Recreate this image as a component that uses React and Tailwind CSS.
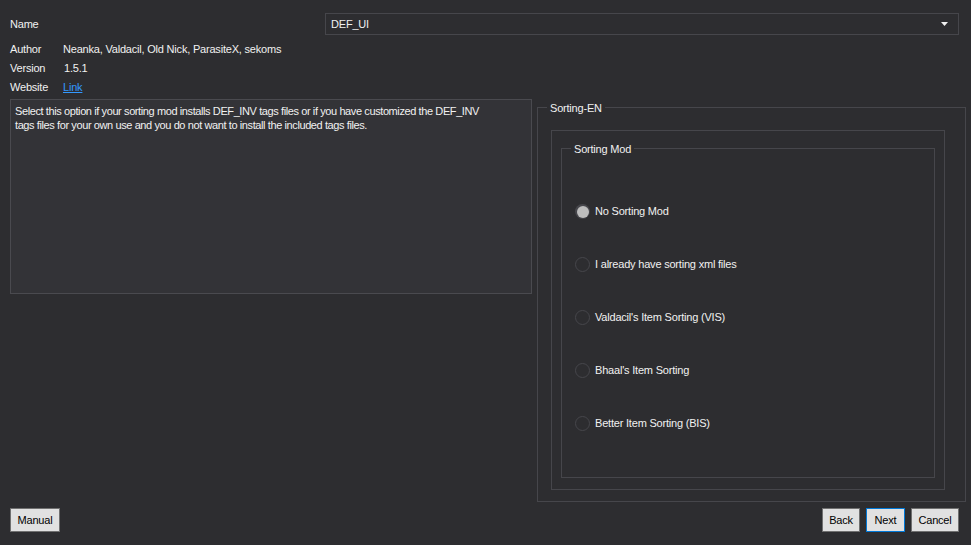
import React from 'react';

const options = [
    'No Sorting Mod',
    'I already have sorting xml files',
    "Valdacil's Item Sorting (VIS)",
    "Bhaal's Item Sorting",
    'Better Item Sorting (BIS)',
];

const GroupBox = ({ title, className, children }) => (
    <div className={`relative shrink-0 border border-[#46464b] ${className}`}>
        <span className="absolute -top-[7px] left-[9px] bg-[#2d2d30] px-[3px] leading-[14px]">{title}</span>
        {children}
    </div>
);

const Radio = ({ label, checked }) => (
    <div className="flex items-center h-[53px] gap-[5px]">
        {checked ? (
            <div className="w-[15px] h-[15px] rounded-full bg-[#46464b] flex items-center justify-center">
                <div className="w-[12px] h-[12px] rounded-full bg-[#bdbdbd]" />
            </div>
        ) : (
            <div className="w-[15px] h-[15px] rounded-full border border-[#46464b]" />
        )}
        <span>{label}</span>
    </div>
);

const Button = ({ children, primary, className = '' }) => (
    <button
        className={`h-[24px] bg-[#e1e1e1] text-black border ${primary ? 'border-[#0078d7]' : 'border-[#707070]'} leading-none ${className}`}
    >
        {children}
    </button>
);

export default function App() {
    return (
        <div
            className="w-[971px] h-[545px] overflow-hidden bg-[#2d2d30] text-[#f1f1f1] text-[11px] tracking-[-0.2px] flex flex-col pt-[13px] px-[10px]"
            style={{ fontFamily: '"Liberation Sans", Arial, sans-serif' }}
        >
            <div className="flex items-center h-[22px]">
                <div className="w-[315px]">Name</div>
                <div className="flex-1 mr-[2px] h-[22px] border border-[#46464b] flex items-center justify-between pl-[5px] pr-[10px]">
                    <span>DEF_UI</span>
                    <svg width="7" height="4" viewBox="0 0 7 4">
                        <path d="M0 0h7L3.5 4z" fill="#f1f1f1" />
                    </svg>
                </div>
            </div>

            <div className="mt-[5px] flex flex-col">
                <div className="flex items-center h-[19px]">
                    <div className="w-[53px]">Author</div>
                    <div>Neanka, Valdacil, Old Nick, ParasiteX, sekoms</div>
                </div>
                <div className="flex items-center h-[19px]">
                    <div className="w-[54px]">Version</div>
                    <div>1.5.1</div>
                </div>
                <div className="flex items-center h-[19px]">
                    <div className="w-[53px]">Website</div>
                    <a className="text-[#3399ff] underline">Link</a>
                </div>
            </div>

            <div className="mt-[2px] h-[403px] flex items-start">
                <div className="shrink-0 w-[522px] h-[195px] bg-[#333337] border border-[#4a4a4f] px-[4px] pt-[4px] leading-[14px] tracking-[-0.4px]">
                    Select this option if your sorting mod installs DEF_INV tags files or if you have customized the DEF_INV
                    <br />
                    tags files for your own use and you do not want to install the included tags files.
                </div>

                <GroupBox title="Sorting-EN" className="ml-[5px] mt-[8px] w-[429px] h-[395px] pl-[13px] pr-[20px] pt-[22px] pb-[11px]">
                    <div className="h-full border border-[#46464b] pl-[9px] pr-[9px] pt-[17px] pb-[11px]">
                        <GroupBox title="Sorting Mod" className="h-full pl-[13px] pt-[36px]">
                            {options.map((o, i) => (
                                <Radio key={o} label={o} checked={i === 0} />
                            ))}
                        </GroupBox>
                    </div>
                </GroupBox>
            </div>

            <div className="mt-[6px] flex items-center justify-between mr-[2px]">
                <Button className="w-[50px]">Manual</Button>
                <div className="flex gap-[6px]">
                    <Button className="w-[38px]">Back</Button>
                    <Button className="w-[39px]" primary>Next</Button>
                    <Button className="w-[48px]">Cancel</Button>
                </div>
            </div>
        </div>
    );
}
